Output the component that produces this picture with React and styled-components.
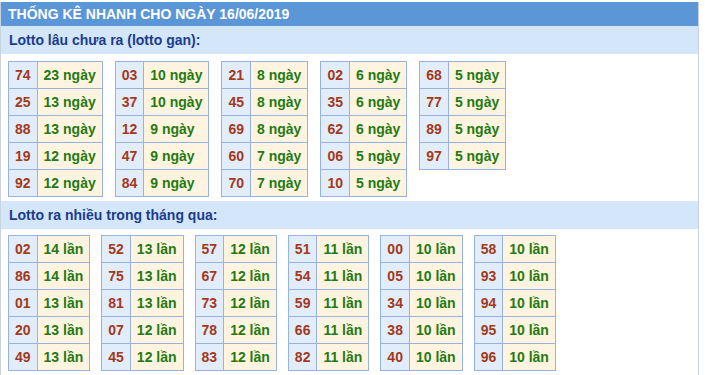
import React from "react";
import styled, { createGlobalStyle } from "styled-components";

const GlobalStyle = createGlobalStyle`
  body {
    margin: 0;
    background: #ffffff;
    font-family: "Liberation Sans", Arial, sans-serif;
  }
`;

const Box = styled.div`
  width: 699px;
  margin-top: 2px;
  border-left: 1px solid #c9d3e0;
  border-right: 1px solid #c9d3e0;
  min-height: 373px;
  box-sizing: border-box;
`;

const Header = styled.div`
  height: 24px;
  line-height: 25px;
  background: #5b96d6;
  color: #ffffff;
  font-size: 14px;
  font-weight: 700;
  padding-left: 7px;
`;

const SubHeader = styled.div`
  height: 28px;
  line-height: 29px;
  background: #d3e6fa;
  color: #1b3c8e;
  font-size: 14px;
  font-weight: 700;
  padding-left: 8px;
  margin-top: ${(props) => props.$mt || 0}px;
`;

const Group = styled.div`
  display: flex;
  align-items: flex-start;
  gap: ${(props) => props.$gap || 12}px;
  padding: ${(props) => props.$pt || 7}px 0 0 7px;
`;

const Table = styled.table`
  border-collapse: collapse;
  font-size: 14px;
  font-weight: 700;
`;

const Cell = styled.td`
  height: 26px;
  padding: 0 6px;
  border: 1px solid #97b1e0;
  white-space: nowrap;
  background: ${(props) => (props.$num ? "#e2edfb" : "#fff4e0")};
  color: ${(props) => (props.$num ? "#a3391b" : "#237a12")};
`;

const gan = [
  [["74", "23 ngày"], ["25", "13 ngày"], ["88", "13 ngày"], ["19", "12 ngày"], ["92", "12 ngày"]],
  [["03", "10 ngày"], ["37", "10 ngày"], ["12", "9 ngày"], ["47", "9 ngày"], ["84", "9 ngày"]],
  [["21", "8 ngày"], ["45", "8 ngày"], ["69", "8 ngày"], ["60", "7 ngày"], ["70", "7 ngày"]],
  [["02", "6 ngày"], ["35", "6 ngày"], ["62", "6 ngày"], ["06", "5 ngày"], ["10", "5 ngày"]],
  [["68", "5 ngày"], ["77", "5 ngày"], ["89", "5 ngày"], ["97", "5 ngày"]],
];

const nhieu = [
  [["02", "14 lần"], ["86", "14 lần"], ["01", "13 lần"], ["20", "13 lần"], ["49", "13 lần"]],
  [["52", "13 lần"], ["75", "13 lần"], ["81", "13 lần"], ["07", "12 lần"], ["45", "12 lần"]],
  [["57", "12 lần"], ["67", "12 lần"], ["73", "12 lần"], ["78", "12 lần"], ["83", "12 lần"]],
  [["51", "11 lần"], ["54", "11 lần"], ["59", "11 lần"], ["66", "11 lần"], ["82", "11 lần"]],
  [["00", "10 lần"], ["05", "10 lần"], ["34", "10 lần"], ["38", "10 lần"], ["40", "10 lần"]],
  [["58", "10 lần"], ["93", "10 lần"], ["94", "10 lần"], ["95", "10 lần"], ["96", "10 lần"]],
];

function StatTable({ rows }) {
  return (
    <Table>
      <tbody>
        {rows.map(([num, count]) => (
          <tr key={num}>
            <Cell $num>{num}</Cell>
            <Cell>{count}</Cell>
          </tr>
        ))}
      </tbody>
    </Table>
  );
}

export default function App() {
  return (
    <>
      <GlobalStyle />
      <Box>
        <Header>THỐNG KÊ NHANH CHO NGÀY 16/06/2019</Header>
        <SubHeader>Lotto lâu chưa ra (lotto gan):</SubHeader>
        <Group>
          {gan.map((rows, i) => (
            <StatTable key={i} rows={rows} />
          ))}
        </Group>
        <SubHeader $mt={4}>Lotto ra nhiều trong tháng qua:</SubHeader>
        <Group $pt={6} $gap={11}>
          {nhieu.map((rows, i) => (
            <StatTable key={i} rows={rows} />
          ))}
        </Group>
      </Box>
    </>
  );
}
